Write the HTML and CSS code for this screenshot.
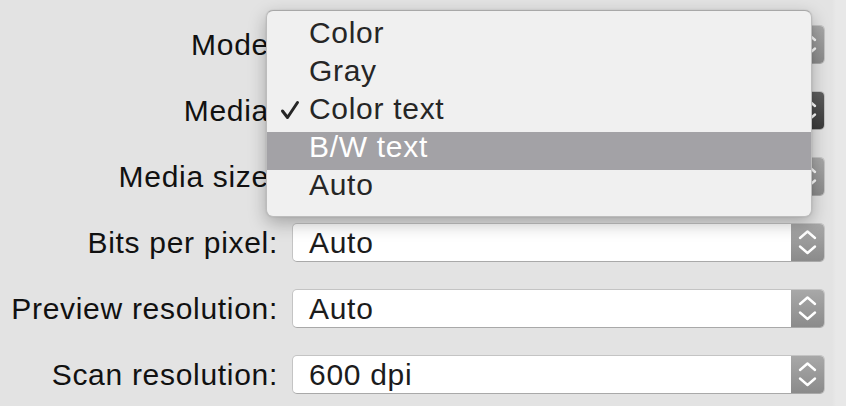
FILE: index.html
```html
<!DOCTYPE html>
<html>
<head>
<meta charset="utf-8">
<link rel="stylesheet" href="styles.css">
</head>
<body>
<div class="window">
  <div class="form">
    <div class="label">Mode:</div>
    <div class="select"><span class="value"></span><span class="stepper"><svg viewBox="0 0 33 39" width="33" height="39"><path d="M9 15 L16.5 8.5 L24 15 M9 23.5 L16.5 30 L24 23.5" /></svg></span></div>

    <div class="label">Media:</div>
    <div class="select"><span class="value"></span><span class="stepper dark"><svg viewBox="0 0 33 39" width="33" height="39"><path d="M9 15 L16.5 8.5 L24 15 M9 23.5 L16.5 30 L24 23.5" /></svg></span></div>

    <div class="label">Media size:</div>
    <div class="select"><span class="value"></span><span class="stepper"><svg viewBox="0 0 33 39" width="33" height="39"><path d="M9 15 L16.5 8.5 L24 15 M9 23.5 L16.5 30 L24 23.5" /></svg></span></div>

    <div class="label">Bits per pixel:</div>
    <div class="select"><span class="value">Auto</span><span class="stepper"><svg viewBox="0 0 33 39" width="33" height="39"><path d="M9 15 L16.5 8.5 L24 15 M9 23.5 L16.5 30 L24 23.5" /></svg></span></div>

    <div class="label">Preview resolution:</div>
    <div class="select"><span class="value">Auto</span><span class="stepper"><svg viewBox="0 0 33 39" width="33" height="39"><path d="M9 15 L16.5 8.5 L24 15 M9 23.5 L16.5 30 L24 23.5" /></svg></span></div>

    <div class="label">Scan resolution:</div>
    <div class="select"><span class="value">600 dpi</span><span class="stepper"><svg viewBox="0 0 33 39" width="33" height="39"><path d="M9 15 L16.5 8.5 L24 15 M9 23.5 L16.5 30 L24 23.5" /></svg></span></div>
  </div>

  <div class="menu">
    <div class="item">Color</div>
    <div class="item">Gray</div>
    <div class="item checked"><svg class="check" viewBox="0 0 20 20" width="20" height="20"><path d="M2.5 11 L7.5 17.5 L17.5 2.5" /></svg>Color text</div>
    <div class="item active">B/W text</div>
    <div class="item">Auto</div>
  </div>
</div>
</body>
</html>
```

FILE: styles.css
```css
html, body {
  margin: 0;
  padding: 0;
}

body {
  background: #e3e3e3;
  font-family: "Liberation Sans", Arial, sans-serif;
  font-size: 30px;
  letter-spacing: 0.7px;
  width: 846px;
  height: 406px;
  overflow: hidden;
}

.window {
  position: relative;
  width: 846px;
  height: 406px;
  background: linear-gradient(to right, #e3e3e3 0, #e3e3e3 832px, #e8e8e8 836px, #e8e8e8 846px);
}

.form {
  display: grid;
  grid-template-columns: 277px 533px;
  grid-auto-rows: 39px;
  column-gap: 15px;
  row-gap: 27px;
  padding-top: 25px;
}

.label {
  display: flex;
  align-items: center;
  justify-content: flex-end;
  color: #111;
  white-space: nowrap;
  margin-right: -1px;
}

.select {
  display: flex;
  align-items: stretch;
  background: #fff;
  border: 1px solid #c4c4c4;
  border-bottom-color: #a9a9a9;
  border-radius: 5px;
  overflow: hidden;
  box-sizing: border-box;
}

.select .value {
  flex: 1;
  display: flex;
  align-items: center;
  padding-left: 16px;
  color: #1c1c1c;
}

.stepper {
  width: 33px;
  background: linear-gradient(to bottom, #a8a8a8, #8b8b8b);
  display: flex;
  align-items: center;
  justify-content: center;
}

.stepper.dark {
  background: linear-gradient(to bottom, #5e5e5e, #3b3b3b);
}

.stepper svg {
  display: block;
}

.stepper path {
  fill: none;
  stroke: #fff;
  stroke-width: 2.4;
  stroke-linecap: round;
  stroke-linejoin: round;
}

.menu {
  position: absolute;
  left: 266px;
  top: 10px;
  width: 546px;
  height: 207px;
  box-sizing: border-box;
  padding: 7px 0 9px;
  background: #f0f0f0;
  border-radius: 7px;
  border: 1px solid #bcbcbc;
  border-top-color: #a8a8a8;
  box-shadow: 0 6px 18px rgba(0, 0, 0, 0.28), 0 0 2px rgba(0, 0, 0, 0.12);
  overflow: hidden;
}

.item {
  position: relative;
  height: 38px;
  box-sizing: border-box;
  padding-bottom: 9px;
  display: flex;
  align-items: center;
  padding-left: 42px;
  color: #262626;
  white-space: nowrap;
}

.item.active {
  background: #a3a2a6;
  color: #fff;
}

.check {
  position: absolute;
  left: 13px;
  top: 6px;
}

.check path {
  fill: none;
  stroke: #262626;
  stroke-width: 3;
  stroke-linecap: round;
  stroke-linejoin: round;
}
```
